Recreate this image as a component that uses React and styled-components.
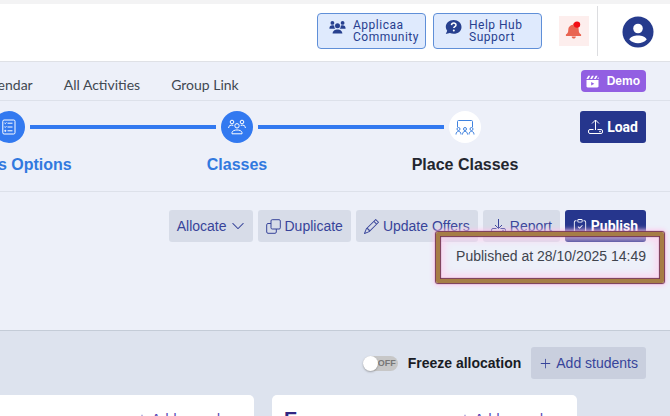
import React from "react";
import styled, { createGlobalStyle } from "styled-components";
import {
  BsChevronDown,
  BsClipboardCheck,
  BsPencil,
  BsPlusLg,
} from "react-icons/bs";

const GlobalStyle = createGlobalStyle`
  * { box-sizing: border-box; }
  body {
    margin: 0;
    background: #edf0f9;
    color: #212529;
    font-family: "Liberation Sans", Arial, sans-serif;
    overflow-x: hidden;
  }
  button { font-family: inherit; cursor: pointer; }
`;

const TopBar = styled.header`
  display: flex;
  justify-content: flex-end;
  align-items: center;
  height: 62px;
  padding: 0 16px 4px 0;
  background: #fff;
  border-top: 4px solid #f3f3f4;
  border-bottom: 1px solid #dfe1e6;
`;

const HelpLink = styled.a`
  display: flex;
  align-items: flex-start;
  gap: 7px;
  width: 109px;
  height: 36px;
  margin-right: 7px;
  padding: 5px 0 0 11px;
  border: 1px solid #5f8fd8;
  border-radius: 4px;
  background: #dfeafd;
  color: #27408f;
  font: 12px/12px Roboto, sans-serif;
  letter-spacing: 0.5px;
  text-decoration: none;
  svg { flex: none; }
`;

const BellButton = styled.button`
  display: grid;
  place-items: center;
  width: 30px;
  height: 30px;
  margin: 0 8px 0 10px;
  padding: 0;
  border: 0;
  background: #fdeeed;
`;

const Account = styled.div`
  display: flex;
  align-items: center;
  height: 50px;
  padding: 2px 0 0 24px;
  border-left: 1px solid #dcdde0;
  button { display: flex; padding: 0; border: 0; background: none; }
`;

const NavBar = styled.nav`
  display: flex;
  justify-content: space-between;
  height: 39px;
  padding-right: 24px;
  border-bottom: 1px solid #dde1ea;
`;

const NavLinks = styled.div`
  display: flex;
  gap: 31px;
  margin-left: -22px;
  padding-top: 14px;
  a {
    color: #414852;
    font: 14px/18px Lato, sans-serif;
    text-decoration: none;
  }
`;

const DemoButton = styled.button`
  display: flex;
  align-items: center;
  gap: 8px;
  height: 22px;
  margin-top: 8px;
  padding: 0 6px 0 5px;
  border: 0;
  border-radius: 4px;
  background: #925fe2;
  color: #fff;
  font-size: 12px;
  font-weight: bold;
`;

const StepBar = styled.section`
  display: flex;
  justify-content: space-between;
  height: 91px;
  padding: 10px 24px 0 0;
  border-bottom: 1px solid #dde1ea;
`;

const Steps = styled.ol`
  display: flex;
  margin: 0 0 0 -105px;
  padding: 0;
  list-style: none;
`;

const Step = styled.li`
  width: 228px;
  text-align: center;
  color: ${({ $done }) => ($done ? "#3179df" : "#23262f")};
  font-size: 16px;
  font-weight: bold;
  line-height: 20px;
`;

const Track = styled.div`
  display: grid;
  grid-template-columns: 1fr 32px 1fr;
  align-items: center;
  gap: 5px;
  margin-bottom: 12px;
`;

const Line = styled.span`
  height: 4px;
  background: ${({ $on }) => ($on ? "#3279f0" : "transparent")};
`;

const Dot = styled.span`
  display: grid;
  place-items: center;
  width: 32px;
  height: 32px;
  border-radius: 50%;
  background: ${({ $done }) => ($done ? "#3279f0" : "#fff")};
  color: ${({ $done }) => ($done ? "#fff" : "#3f82df")};
`;

const Button = styled.button`
  display: flex;
  align-items: center;
  gap: 4px;
  height: 32px;
  padding: 0 8px;
  border: 0;
  border-radius: 3px;
  background: ${({ $primary }) => ($primary ? "#26368d" : "#d7dce8")};
  color: ${({ $primary }) => ($primary ? "#fff" : "#37449a")};
  font: ${({ $primary }) =>
    $primary ? "bold 14px Roboto, sans-serif" : '14px "Liberation Sans", Arial, sans-serif'};
  white-space: nowrap;
  svg { flex: none; }
`;

const Actions = styled.section`
  position: relative;
  height: 138px;
  padding: 18px 24px 0 0;
`;

const ButtonRow = styled.div`
  display: flex;
  justify-content: flex-end;
  gap: 5px;
`;

const Published = styled.p`
  margin: 5px 0 0;
  color: #40444e;
  font-size: 14px;
  line-height: 18px;
  text-align: right;
`;

const Highlight = styled.div`
  position: absolute;
  top: 40px;
  right: 6px;
  width: 228px;
  height: 51px;
  border: 4px solid #a67d46;
  border-radius: 2px;
  box-shadow: 0 0 1px 1px #74334f, 0 0 5px 2px #ffc5ec,
    inset 0 0 1px 1px #74334f, inset 0 0 6px 5px #ffcdeeb0;
  pointer-events: none;
`;

const Board = styled.main`
  height: 86px;
  border-top: 1px solid #c4ccd7;
  background: #dde3ee;
  overflow: hidden;
`;

const BoardTools = styled.div`
  display: flex;
  justify-content: flex-end;
  align-items: center;
  gap: 10px;
  padding: 16px 24px 16px 0;
  ${Button} { background: #c9cfde; }
`;

const Freeze = styled.label`
  display: flex;
  align-items: center;
  gap: 10px;
  color: #191c25;
  font-size: 14px;
  font-weight: bold;
`;

const Toggle = styled.input`
  appearance: none;
  display: flex;
  align-items: center;
  width: 35px;
  height: 15px;
  margin: 0;
  border-radius: 8px;
  background: #c7c7c7;
  &::before {
    content: "";
    width: 15px;
    height: 15px;
    border-radius: 50%;
    background: #fff;
    box-shadow: 0 1px 2px #6668;
  }
  &::after {
    content: "OFF";
    color: #777;
    font: bold 9px/15px "Liberation Sans", sans-serif;
  }
  &:checked { flex-direction: row-reverse; background: #8db5f5; }
  &:checked::after { content: "ON"; }
`;

const Cards = styled.div`
  display: grid;
  grid-template-columns: 305px 305px;
  gap: 18px;
  margin-left: -51px;
`;

const Card = styled.article`
  display: flex;
  justify-content: space-between;
  height: 180px;
  padding: 12px 34px 0 12px;
  border-radius: 5px;
  background: #fff;
  h2 { margin: 0; color: #302783; font-size: 20px; line-height: 24px; }
  button {
    display: flex;
    align-items: center;
    gap: 4px;
    height: 24px;
    padding: 0;
    border: 0;
    background: none;
    color: #5549b6;
    font-size: 14px;
  }
`;

const PeopleIcon = () => (
  <svg width="17" height="17" viewBox="0 0 17 17" fill="currentColor" aria-hidden="true">
    <circle cx="3.4" cy="3.9" r="1.9" />
    <circle cx="13.6" cy="3.9" r="1.9" />
    <circle cx="8.5" cy="6.8" r="2.5" />
    <path d="M.4 9.7c0-3.3 2.5-3.8 4.9-3 0 1.4.2 2.2 1 3ZM16.6 9.7c0-3.3-2.5-3.8-4.9-3 0 1.4-.2 2.2-1 3ZM3.6 14.6c0-5.6 9.8-5.6 9.8 0Z" />
  </svg>
);

const HelpIcon = () => (
  <svg width="17" height="17" viewBox="0 0 17 17" aria-hidden="true">
    <path d="M8.7 1C4.2 1 .8 4 .8 7.8c0 1.5.5 2.8 1.4 3.9L.8 15.1l4.1-1c1.2.5 2.4.7 3.8.7 4.4 0 7.8-3 7.8-6.9S13.1 1 8.7 1Z" fill="currentColor" />
    <path d="M6.5 6.1c.2-2.7 4.5-2.6 4.5-.2 0 1.7-2.2 1.5-2.2 3.1" fill="none" stroke="#fff" strokeWidth="1.5" />
    <circle cx="8.8" cy="11.4" r="1" fill="#fff" />
  </svg>
);

const AlertBell = () => (
  <svg width="20" height="20" viewBox="0 0 20 20" aria-hidden="true">
    <path d="M9 2.5h2v1.2c2.4.5 3.7 2.3 3.7 4.9 0 3.2.8 4 2.4 5v1.5H1.9v-1.5c1.6-1 2.4-1.8 2.4-5 0-2.6 1.7-4.4 4.7-4.9ZM7.7 15.5h4.1c0 2.8-4.1 2.8-4.1 0Z" fill="#e96451" />
    <circle cx="13" cy="3.6" r="3.2" fill="#f30d15" />
  </svg>
);

const UserIcon = () => (
  <svg width="32" height="32" viewBox="0 0 32 32" aria-hidden="true">
    <circle cx="16" cy="16" r="15.5" fill="#263b8d" />
    <circle cx="16" cy="12.5" r="4.8" fill="#fff" />
    <path d="M7.3 23.5c2.1-5.4 15.3-5.4 17.4 0-4.6 5-12.8 5-17.4 0Z" fill="#fff" />
  </svg>
);

const DemoIcon = () => (
  <svg width="13" height="13" viewBox="0 0 13 13" aria-hidden="true">
    <path d="M.5 5h12v6.3c0 .7-.5 1.2-1.2 1.2H1.7c-.7 0-1.2-.5-1.2-1.2Z" fill="#fff" />
    <path d="M.4 3.9 2.2.8h2L2.4 3.9Zm3.7 0L5.9.8h2L6.1 3.9Zm3.8 0L9.7.8h1.9L9.8 3.9Zm3.5 0 1.2-2v2Z" fill="#fff" />
    <path d="m5.2 7 3.1 1.8-3.1 1.8Z" fill="#925fe2" />
  </svg>
);

const ListIcon = () => (
  <svg width="14" height="16" viewBox="0 0 14 16" fill="none" stroke="currentColor" aria-hidden="true">
    <rect x=".8" y="1" width="12.2" height="14" rx="1.3" />
    <path d="M5.5 4.2h5M5.5 8h5M5.5 11.8h5M2.5 4l.8.7 1.1-1.3M2.5 7.8l.8.7 1.1-1.3M2.8 11.3h1v1h-1Z" />
  </svg>
);

const GroupIcon = () => (
  <svg width="18" height="17" viewBox="0 0 18 17" fill="none" stroke="currentColor" aria-hidden="true">
    <circle cx="4" cy="3" r="1.8" />
    <circle cx="14" cy="3" r="1.8" />
    <circle cx="9" cy="6.8" r="2.2" />
    <path d="M.6 9c0-2.6 2-3.3 4.7-2.6M17.4 9c0-2.6-2-3.3-4.7-2.6M4 14.8v-1.3c.7-3.4 9.3-3.4 10 0v1.3Z" />
  </svg>
);

const ClassroomIcon = () => (
  <svg width="20" height="17" viewBox="0 0 20 17" fill="none" stroke="currentColor" aria-hidden="true">
    <path d="M2.5 8V2.5c0-.6.4-1 1-1h13c.6 0 1 .4 1 1V8" />
    {[3.5, 10, 16.5].map((x) => (
      <g key={x}>
        <circle cx={x} cy="10" r="1.5" />
        <path d={`M${x - 2.5} 15.5c0-4.2 5-4.2 5 0`} />
      </g>
    ))}
  </svg>
);

const TrayIcon = ({ down }) => (
  <svg width="15" height="16" viewBox="0 0 15 16" fill="none" stroke="currentColor" aria-hidden="true">
    <path d={down ? "M7.5 1v9.5M4 7l3.5 3.5L11 7" : "M7.5 11V1M4 4.5 7.5 1 11 4.5"} />
    <path d="M5.5 10.5H2A1.5 1.5 0 0 0 .5 12v1A1.5 1.5 0 0 0 2 14.5h11a1.5 1.5 0 0 0 1.5-1.5v-1a1.5 1.5 0 0 0-1.5-1.5H9.5" />
    <circle cx="12" cy="12.5" r=".5" />
  </svg>
);

const CopyIcon = () => (
  <svg width="15" height="15" viewBox="0 0 15 15" fill="none" stroke="currentColor" aria-hidden="true">
    <rect x="5" y=".7" width="9.3" height="9.3" rx="1.2" />
    <path d="M5 4.5H2c-.8 0-1.3.5-1.3 1.3V13c0 .8.5 1.3 1.3 1.3h7c.8 0 1.3-.5 1.3-1.3v-3" />
  </svg>
);

const steps = [
  { label: "Classes Options", icon: <ListIcon />, done: true, before: true, after: true },
  { label: "Classes", icon: <GroupIcon />, done: true, before: true, after: true },
  { label: "Place Classes", icon: <ClassroomIcon />, before: true },
];

const App = () => {
  return (
    <>
      <GlobalStyle />
      <TopBar>
        <HelpLink href="#community">
          <PeopleIcon />
          <span>Applicaa<br />Community</span>
        </HelpLink>
        <HelpLink href="#support">
          <HelpIcon />
          <span>Help Hub<br />Support</span>
        </HelpLink>
        <BellButton aria-label="Notifications"><AlertBell /></BellButton>
        <Account>
          <button aria-label="Account"><UserIcon /></button>
        </Account>
      </TopBar>
      <NavBar>
        <NavLinks>
          <a href="#calendar">Calendar</a>
          <a href="#activities">All Activities</a>
          <a href="#group">Group Link</a>
        </NavLinks>
        <DemoButton><DemoIcon />Demo</DemoButton>
      </NavBar>
      <StepBar>
        <Steps>
          {steps.map((step) => (
            <Step key={step.label} $done={step.done}>
              <Track>
                <Line $on={step.before} />
                <Dot $done={step.done}>{step.icon}</Dot>
                <Line $on={step.after} />
              </Track>
              {step.label}
            </Step>
          ))}
        </Steps>
        <Button $primary><TrayIcon />Load</Button>
      </StepBar>
      <Actions>
        <ButtonRow>
          <Button>Allocate<BsChevronDown size={14} /></Button>
          <Button><CopyIcon />Duplicate</Button>
          <Button><BsPencil size={15} />Update Offers</Button>
          <Button><TrayIcon down />Report</Button>
          <Button $primary><BsClipboardCheck size={14} />Publish</Button>
        </ButtonRow>
        <Published>Published at 28/10/2025 14:49</Published>
        <Highlight />
      </Actions>
      <Board>
        <BoardTools>
          <Freeze>
            <Toggle type="checkbox" />
            Freeze allocation
          </Freeze>
          <Button><BsPlusLg size={13} />Add students</Button>
        </BoardTools>
        <Cards>
          <Card><h2>D</h2><button><BsPlusLg size={12} />Add record</button></Card>
          <Card><h2>E</h2><button><BsPlusLg size={12} />Add record</button></Card>
        </Cards>
      </Board>
    </>
  );
};

export default App;
